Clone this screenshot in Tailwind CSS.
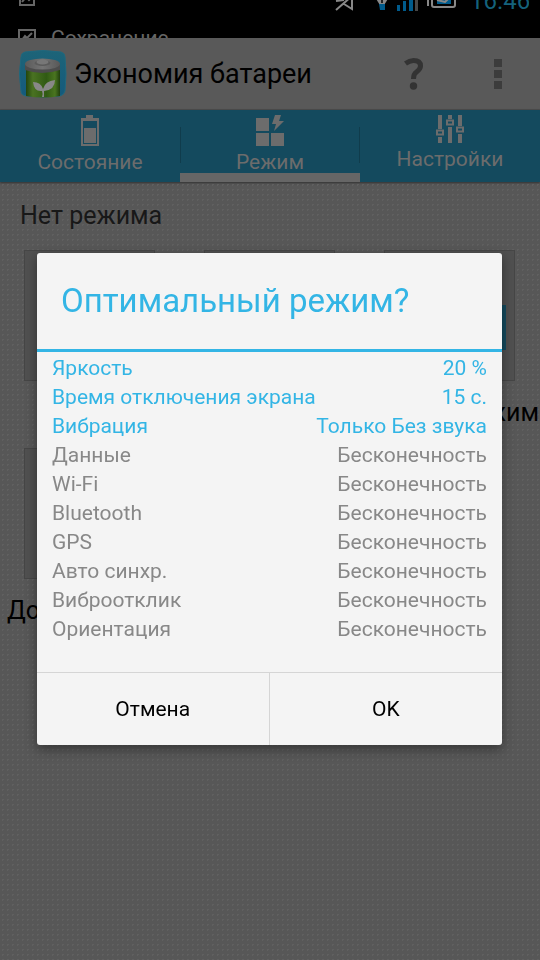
<!DOCTYPE html>
<html lang="ru">
<head>
    <meta charset="UTF-8" />
    <meta name="viewport" content="width=device-width, initial-scale=1.0" />
    <title>Экономия батареи</title>
    <script src="https://cdn.jsdelivr.net/npm/@tailwindcss/browser@4"></script>
</head>
<body class="min-h-screen flex flex-col bg-[#575757] font-[Roboto,sans-serif] text-black overflow-hidden">
    <!-- System bar, sliding away under the app -->
    <div class="h-[38px] bg-black overflow-hidden">
        <div class="-mt-6 h-9 flex items-center pl-[18px] pr-[11px] text-[#666]">
            <svg class="mt-2 w-[18px] h-[18px]" viewBox="0 0 18 18" fill="none" stroke="currentColor" stroke-width="2"><path d="M2 1h14v15H2zM4 13l4-5 3 3 4-4" /></svg>
            <svg class="ml-auto w-[200px] h-9" viewBox="330 -24 200 36" fill="none">
                <path d="M337 1l8-1M337 10l16-14M345 4l8 5v-14" stroke="#888" stroke-width="2" />
                <path d="M376-3h14l-6 10h-2z" fill="#888" />
                <path d="M380 4h6v6h-5z" fill="#005b8c" /><path d="M383-2v5" stroke="#222" stroke-width="2" />
                <path d="M398 5h3v6h-3zM404 1h3v10h-3zM410-3h4v14h-4z" fill="#005b8c" /><path d="M416-8h3v19h-3z" fill="#484848" />
                <path d="M429-3v9M433-6v11q0 2 2 2h19q2 0 2-2v-11" stroke="#888" stroke-width="2" />
                <path d="M438 4v-3l6-4h8v7z" fill="#005b8c" /><path d="M438 0l8 2 3-3" stroke="#888" stroke-width="2" />
                <text x="471" y="9" font-size="24" fill="#14627c">16.46</text>
            </svg>
        </div>
        <div class="flex items-center gap-[15px] h-[52px] pl-[18px] text-[21px] leading-[52px] text-[#666]">
            <svg class="w-[18px] h-[18px]" viewBox="0 0 18 18" fill="none" stroke="currentColor" stroke-width="2"><path d="M1 1h16v16H1zM4 11l3-4 2 2 5-5" /></svg>
            <span>Сохранение</span>
        </div>
    </div>

    <header class="h-[72px] flex items-center pl-[19px] pr-9 bg-[#595959] border-b border-[#4c4c4c]">
        <svg class="w-12 h-12" viewBox="0 0 48 48">
            <defs>
                <linearGradient id="sky" x1="0" y1="0" x2="0" y2="1"><stop offset="0" stop-color="#1d6478" /><stop offset="1" stop-color="#145a7c" /></linearGradient>
                <linearGradient id="cell"><stop offset="0" stop-color="#23450e" /><stop offset=".2" stop-color="#4a7222" /><stop offset=".6" stop-color="#305a13" /><stop offset=".85" stop-color="#4a7520" /><stop offset="1" stop-color="#203f0e" /></linearGradient>
                <linearGradient id="cap"><stop offset="0" stop-color="#5a5a5a" /><stop offset=".5" stop-color="#747474" /><stop offset="1" stop-color="#585858" /></linearGradient>
            </defs>
            <path d="M6 2q18-3 36 0 4 1 4 5 2 17 0 34-1 4-5 5-17 2-34 0-5-1-5-5-3-17 0-34 0-4 4-5z" fill="url(#sky)" stroke="#1f687e" />
            <path d="M7 17v29q17 3 34 0V17z" fill="url(#cell)" />
            <path d="M6 14v6q17 6 35 0v-6z" fill="#4c4c4c" />
            <ellipse cx="23.500" cy="14" rx="17.500" ry="5.500" fill="url(#cap)" />
            <ellipse cx="23.500" cy="13" rx="8" ry="3" fill="#5b5b5b" />
            <ellipse cx="23.500" cy="12" rx="6" ry="2.500" fill="#777" />
            <path d="M23 47q1-4 0-6-8 1-9-9 8 0 10 7 2-8 12-9 0 10-11 11v6z" fill="#888" />
        </svg>
        <h1 class="ml-[7px] text-[27px] leading-8">Экономия батареи</h1>
        <button type="button" aria-label="Справка" class="ml-auto w-12 h-12 flex items-center justify-center text-[#333]">
            <svg class="w-5 h-8" viewBox="0 0 20 32" fill="none">
                <path d="M1.500 5.500q4-3 8-3 7 0 7 5.500 0 3-4 6-3 2-3 7" stroke="currentColor" stroke-width="5" />
                <circle cx="9.500" cy="28" r="3.700" fill="currentColor" />
            </svg>
        </button>
        <button type="button" aria-label="Меню" class="ml-9 w-12 h-12 -mr-[18px] flex flex-col items-center justify-center gap-[3px]">
            <span class="size-2 bg-[#3c3c3c]"></span>
            <span class="size-2 bg-[#3c3c3c]"></span>
            <span class="size-2 bg-[#3c3c3c]"></span>
        </button>
    </header>

    <nav class="h-[72px] grid grid-cols-3 bg-[#144a5e] text-[21px] leading-6 text-[#6c6c6c] shadow-[0_1px_2px_#333]">
        <button type="button" class="flex flex-col items-center pt-[5px] gap-1">
            <svg class="w-5 h-[31px]" viewBox="0 0 20 31"><path d="M6 0h7v3h6v28H1V3h5zM3 6v23h14V6z" fill="currentColor" fill-rule="evenodd" /><path d="M4 13h12v15H4z" fill="currentColor" /></svg>
            <span>Состояние</span>
        </button>
        <button type="button" class="relative flex flex-col items-center pt-[5px] gap-1">
            <svg class="w-[30px] h-[31px]" viewBox="0 0 30 31" fill="currentColor"><path d="M1 3h13v13H1zM1 18h13v13H1zM16 18h13v13H16zM20 0h6l-2 6h5l-10 10 2-7h-4z" /></svg>
            <span>Режим</span>
            <span class="absolute inset-x-0 bottom-0 h-[9px] bg-[#666]"></span>
            <span class="absolute left-0 top-[17px] h-9 w-px bg-[#103c4c]"></span>
            <span class="absolute right-0 top-[17px] h-9 w-px bg-[#103c4c]"></span>
        </button>
        <button type="button" class="flex flex-col items-center pt-[5px] gap-1">
            <svg class="w-7 h-7" viewBox="0 0 28 28" fill="none" stroke="currentColor"><path d="M4 0v14M4 22v6M14 0v4M14 12v16M24 0v11M24 19v9" stroke-width="4" /><path d="M1 15.500h6v4H1zM11 5.500h6v4h-6zM21 12.500h6v4h-6z" stroke-width="2" /></svg>
            <span>Настройки</span>
        </button>
    </nav>

    <main class="flex-1 pt-5 bg-[radial-gradient(#606060_1px,transparent_1px)] bg-[size:5px_5px]">
        <h2 class="pl-5 text-[25px] leading-7 text-[#181818]">Нет режима</h2>
        <div class="mt-5 grid grid-cols-3 gap-y-[19px] text-[25px] leading-8 whitespace-nowrap">
            <div>
                <div class="ml-6 mr-[25px] h-[131px] bg-[#505050] border border-[#464646]"></div>
            </div>
            <div>
                <div class="ml-6 mr-[25px] h-[131px] bg-[#505050] border border-[#464646]"></div>
            </div>
            <div>
                <div class="ml-6 mr-[25px] h-[131px] pr-2 flex items-center justify-end bg-[#505050] border border-[#464646]">
                    <span class="w-24 h-[45px] mt-6 bg-[#144a5e]"></span>
                </div>
                <p class="mt-4 pr-px text-right">Режим</p>
            </div>
            <div>
                <div class="ml-6 mr-[25px] h-[131px] bg-[#505050] border border-[#464646]"></div>
                <p class="mt-4 pl-[7px]">Доп.</p>
            </div>
        </div>
    </main>

    <div class="fixed inset-0 pt-[38px] px-[37px] flex items-center">
        <div role="dialog" aria-labelledby="dialogTitle" class="w-full pr-px">
            <div class="rounded-[3px] bg-[#f4f4f4] shadow-[0_4px_12px_rgba(0,0,0,0.4)]">
                <h2 id="dialogTitle" class="px-6 py-7 text-[33px] leading-10 text-[#33b5e5]">Оптимальный режим?</h2>
                <div class="border-t-3 border-[#33b5e5] pt-0.5 px-[15px] pb-7">
                    <table class="w-full text-[21px] leading-[29px] text-[#888]">
                        <tbody>
                            <tr class="text-[#33b5e5]"><th scope="row" class="font-normal text-left">Яркость</th><td class="text-right">20 %</td></tr>
                            <tr class="text-[#33b5e5]"><th scope="row" class="font-normal text-left">Время отключения экрана</th><td class="text-right">15 с.</td></tr>
                            <tr class="text-[#33b5e5]"><th scope="row" class="font-normal text-left">Вибрация</th><td class="text-right">Только Без звука</td></tr>
                            <tr><th scope="row" class="font-normal text-left">Данные</th><td class="text-right">Бесконечность</td></tr>
                            <tr><th scope="row" class="font-normal text-left">Wi-Fi</th><td class="text-right">Бесконечность</td></tr>
                            <tr><th scope="row" class="font-normal text-left">Bluetooth</th><td class="text-right">Бесконечность</td></tr>
                            <tr><th scope="row" class="font-normal text-left">GPS</th><td class="text-right">Бесконечность</td></tr>
                            <tr><th scope="row" class="font-normal text-left">Авто синхр.</th><td class="text-right">Бесконечность</td></tr>
                            <tr><th scope="row" class="font-normal text-left">Виброотклик</th><td class="text-right">Бесконечность</td></tr>
                            <tr><th scope="row" class="font-normal text-left">Ориентация</th><td class="text-right">Бесконечность</td></tr>
                        </tbody>
                    </table>
                </div>
                <div class="grid grid-cols-2 border-t border-[#d5d5d5] text-[21px] leading-6">
                    <button type="button" class="h-[72px] border-r border-[#d5d5d5]">Отмена</button>
                    <button type="button" class="h-[72px]">OK</button>
                </div>
            </div>
        </div>
    </div>
</body>
</html>
